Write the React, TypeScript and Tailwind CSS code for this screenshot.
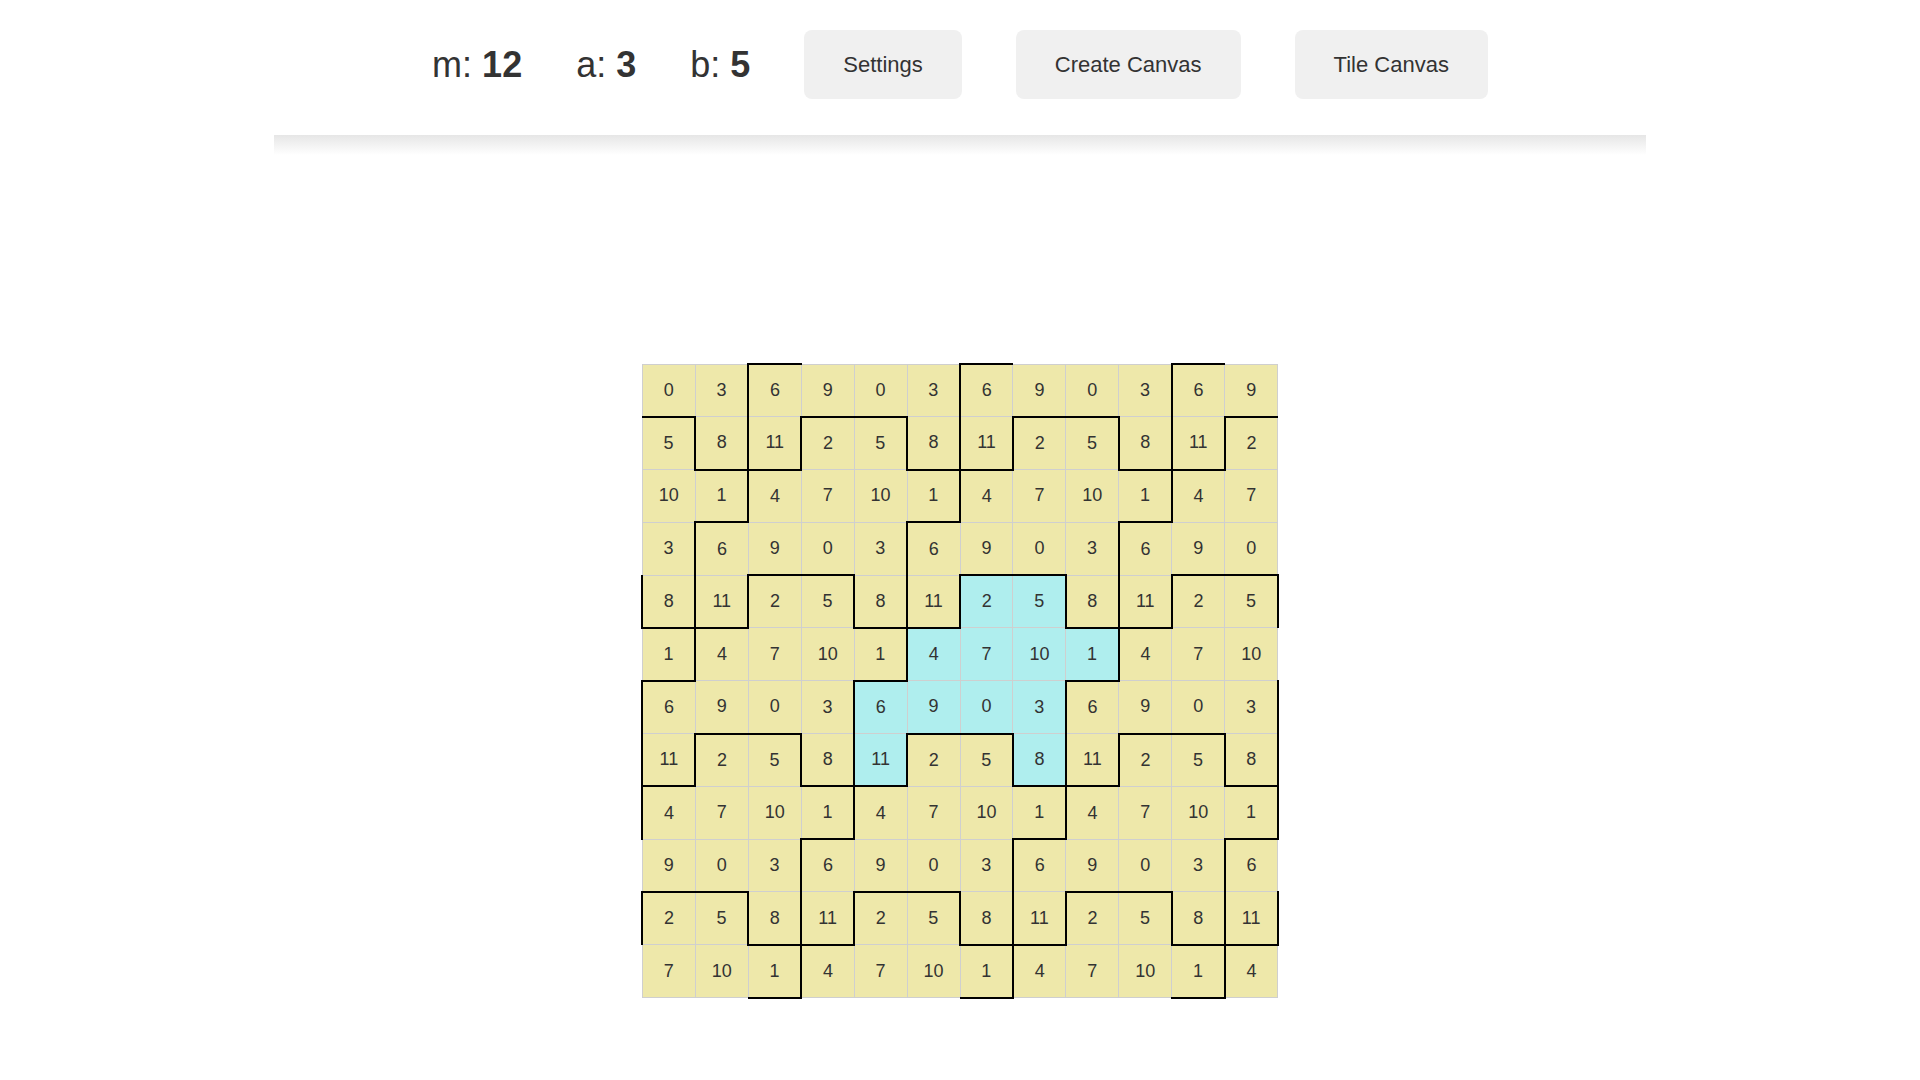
import React from 'react';

const M = 12;
const A = 3;
const B = 5;
const SIZE = 12;

// offsets of the tile relative to its anchor cell
const SHAPE: [number, number][] = [
  [0, 0],
  [0, 1],
  [1, -1],
  [1, 0],
  [1, 1],
  [1, 2],
  [2, -2],
  [2, -1],
  [2, 0],
  [2, 1],
  [3, -2],
  [3, 1],
];

const HIGHLIGHT = '4,6';

const mod = (x: number, n: number) => ((x % n) + n) % n;

// anchors sit on (4,6) + i*(0,4) + j*(3,-1)
function tileOf(r: number, c: number) {
  for (const [dr, dc] of SHAPE) {
    const r0 = r - dr;
    const c0 = c - dc;
    if (mod(r0 - 4, 3) !== 0) continue;
    const j = (r0 - 4) / 3;
    if (mod(c0 - 6 + j, 4) !== 0) continue;
    return `${r0},${c0}`;
  }
  return '';
}

function Cell({ r, c }: { r: number; c: number }) {
  const id = tileOf(r, c);
  const top = tileOf(r - 1, c) !== id;
  const bottom = tileOf(r + 1, c) !== id;
  const left = tileOf(r, c - 1) !== id;
  const right = tileOf(r, c + 1) !== id;
  const value = mod(B * r + A * c, M);

  return (
    <td
      className={[
        'h-[52.8px] w-[52.95px] p-0 text-center align-middle text-[18px] text-[#333]',
        id === HIGHLIGHT ? 'bg-[#afeeee]' : 'bg-[#eee8aa]',
        top ? 'border-t-2 border-t-black' : 'border-t border-t-[#cfcfcf]',
        bottom ? 'border-b-2 border-b-black' : 'border-b border-b-[#cfcfcf]',
        left ? 'border-l-2 border-l-black' : 'border-l border-l-[#cfcfcf]',
        right ? 'border-r-2 border-r-black' : 'border-r border-r-[#cfcfcf]',
      ].join(' ')}
    >
      {value}
    </td>
  );
}

function Stat({ label, value }: { label: string; value: number }) {
  return (
    <div className="text-[36px] leading-none text-[#333]">
      {label}: <span className="font-bold">{value}</span>
    </div>
  );
}

function HeaderButton({ children }: { children: React.ReactNode }) {
  return (
    <button
      type="button"
      className="h-[69px] rounded-lg bg-[#f0f0f0] px-[39px] text-[22px] text-[#333]"
    >
      {children}
    </button>
  );
}

export default function App() {
  const rows = Array.from({ length: SIZE }, (_, r) => r);
  const cols = Array.from({ length: SIZE }, (_, c) => c);

  return (
    <div className="min-h-screen bg-white font-['Liberation_Sans',Arial,sans-serif]">
      <div className="mx-auto w-[1372px]">
        <header className="flex items-center justify-center gap-[54px] bg-white pb-[36px] pt-[30px]">
          <Stat label="m" value={M} />
          <Stat label="a" value={A} />
          <Stat label="b" value={B} />
          <HeaderButton>Settings</HeaderButton>
          <HeaderButton>Create Canvas</HeaderButton>
          <HeaderButton>Tile Canvas</HeaderButton>
        </header>
        <div className="h-[20px] bg-gradient-to-b from-[#e6e6e6] to-white" />
      </div>

      <main className="flex justify-center pt-[208px]">
        <table className="border-collapse">
          <tbody>
            {rows.map((r) => (
              <tr key={r}>
                {cols.map((c) => (
                  <Cell key={c} r={r} c={c} />
                ))}
              </tr>
            ))}
          </tbody>
        </table>
      </main>
    </div>
  );
}
